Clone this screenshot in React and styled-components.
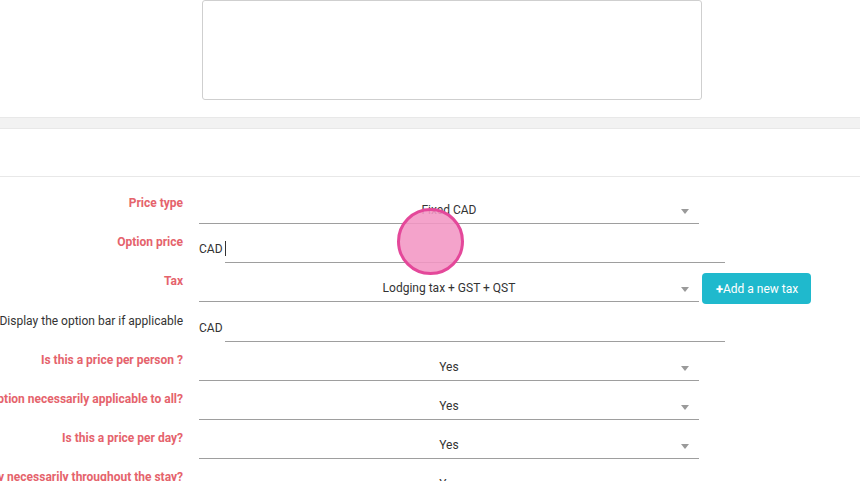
import React from 'react';
import styled, { createGlobalStyle } from 'styled-components';

const Global = createGlobalStyle`
  body { margin: 0; background: #fff; font-family: Roboto, "Liberation Sans", sans-serif; overflow: hidden; }
`;

const Page = styled.div`
  position: relative;
  width: 860px;
  height: 481px;
  overflow: hidden;
`;

const NotesWrap = styled.div`
  padding-left: 202px;
  height: 117px;
`;

const Notes = styled.textarea`
  display: block;
  box-sizing: border-box;
  width: 500px;
  height: 100px;
  border: 1px solid #cfcfcf;
  border-radius: 3px;
  resize: none;
  outline: none;
`;

const Band = styled.div`
  height: 10px;
  background: #f2f2f2;
  border-top: 1px solid #e8e8e8;
  border-bottom: 1px solid #e8e8e8;
`;

const Spacer = styled.div`
  height: 47px;
  border-bottom: 1px solid #e8e8e8;
`;

const Form = styled.div`
  padding-top: 8px;
`;

const Row = styled.div`
  display: grid;
  grid-template-columns: 183px auto;
  column-gap: 16px;
  height: ${p => p.$h || 39}px;
`;

const Label = styled.div`
  display: flex;
  justify-content: flex-end;
  white-space: nowrap;
  padding-top: 11px;
  font-size: 12px;
  line-height: 14px;
  font-weight: ${p => (p.$plain ? 400 : 700)};
  color: ${p => (p.$plain ? '#333' : '#e5636c')};
`;

const Field = styled.div`
  display: flex;
  align-items: flex-start;
  gap: 3px;
`;

const Select = styled.div`
  position: relative;
  box-sizing: border-box;
  width: 500px;
  height: 39px;
  border-bottom: 1px solid #9e9e9e;
  padding-top: 18px;
  text-align: center;
  font-size: 12px;
  line-height: 14px;
  color: #333;
`;

const Arrow = styled.span`
  position: absolute;
  right: 10px;
  top: 24px;
  width: 0;
  height: 0;
  border-left: 4px solid transparent;
  border-right: 4px solid transparent;
  border-top: 5px solid #9a9a9a;
`;

const Addon = styled.span`
  width: 26px;
  padding-top: 18px;
  font-size: 12px;
  line-height: 14px;
  color: #333;
`;

const Input = styled.div`
  box-sizing: border-box;
  width: 500px;
  height: 39px;
  border-bottom: 1px solid #9e9e9e;
  margin-left: -3px;
  padding-top: 17px;
`;

const Caret = styled.span`
  display: inline-block;
  width: 1px;
  height: 15px;
  background: #333;
`;

const AddButton = styled.button`
  margin-top: 10px;
  height: 31px;
  padding: 0 13px 0 14px;
  border: none;
  border-radius: 4px;
  background: #1fb9cd;
  color: #fff;
  font-family: Roboto, "Liberation Sans", sans-serif;
  font-size: 12px;
  white-space: nowrap;
  b { font-weight: 900; font-size: 13px; }
`;

const Click = styled.div`
  position: absolute;
  left: 397px;
  top: 208px;
  width: 61px;
  height: 61px;
  border-radius: 50%;
  border: 3px solid #e4489a;
  background: rgba(242, 150, 196, 0.88);
`;

const selects = [
  ['Is this a price per person ?', 'Yes'],
  ['Is this option necessarily applicable to all?', 'Yes'],
  ['Is this a price per day?', 'Yes'],
  ['Is this a price per day necessarily throughout the stay?', 'Yes'],
];

const SelectBox = ({ value }) => (
  <Select>
    {value}
    <Arrow />
  </Select>
);

export default function App() {
  return (
    <Page>
      <Global />
      <NotesWrap>
        <Notes />
      </NotesWrap>
      <Band />
      <Spacer />
      <Form>
        <Row>
          <Label>Price type</Label>
          <Field><SelectBox value="Fixed CAD" /></Field>
        </Row>
        <Row>
          <Label>Option price</Label>
          <Field>
            <Addon>CAD</Addon>
            <Input><Caret /></Input>
          </Field>
        </Row>
        <Row $h={40}>
          <Label>Tax</Label>
          <Field>
            <SelectBox value="Lodging tax + GST + QST" />
            <AddButton><b>+</b>Add a new tax</AddButton>
          </Field>
        </Row>
        <Row>
          <Label $plain>Display the option bar if applicable</Label>
          <Field>
            <Addon>CAD</Addon>
            <Input />
          </Field>
        </Row>
        {selects.map(([label, value]) => (
          <Row key={label}>
            <Label>{label}</Label>
            <Field><SelectBox value={value} /></Field>
          </Row>
        ))}
      </Form>
      <Click />
    </Page>
  );
}
